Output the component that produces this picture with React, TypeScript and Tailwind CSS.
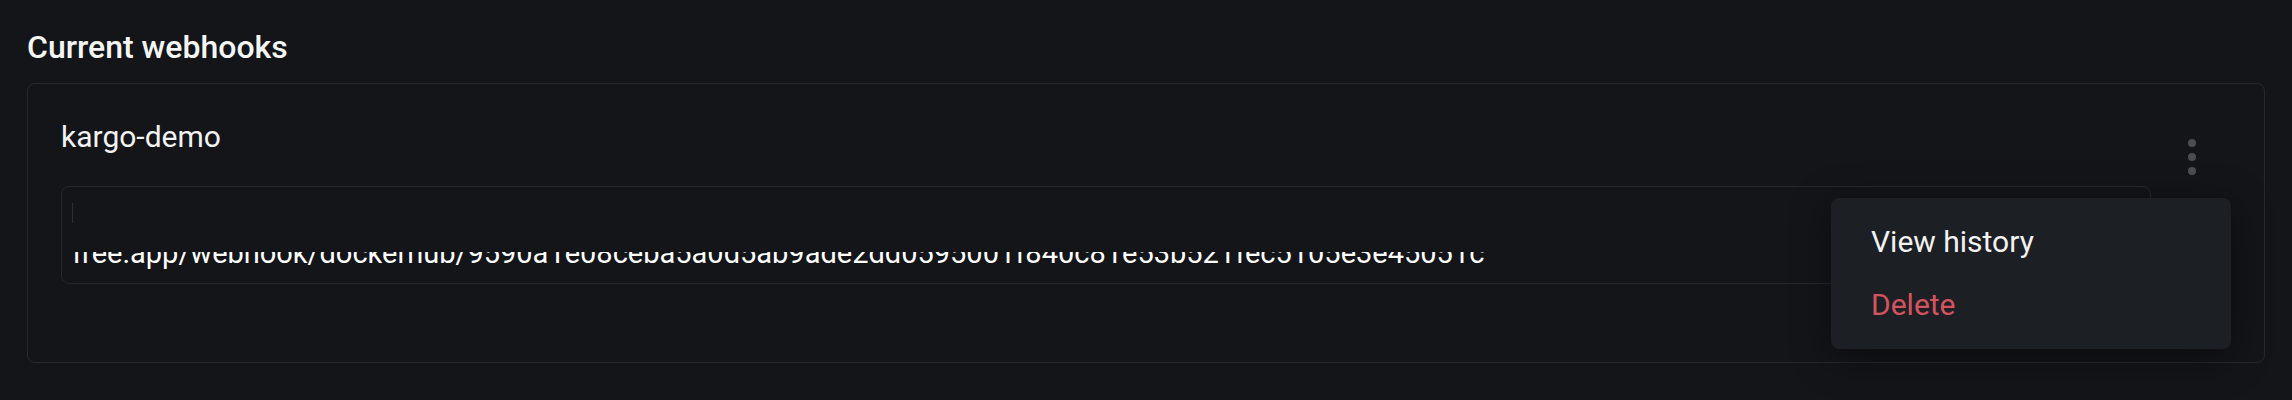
import React from "react";

const URL_TAIL =
  "free.app/webhook/dockerhub/9590a1e08ceba5a0d5ab9ade2dd0595001f840c81e53b521fec5105e3e45051c";

function Kebab() {
  return (
    <div className="flex w-[8px] flex-col gap-[6px]">
      <span className="block w-[8px] h-[8px] rounded-full bg-[#4a4d52]" />
      <span className="block w-[8px] h-[8px] rounded-full bg-[#4a4d52]" />
      <span className="block w-[8px] h-[8px] rounded-full bg-[#4a4d52]" />
    </div>
  );
}

export default function App() {
  return (
    <div
      className="min-h-[400px] w-full bg-[#131519] px-[27px] pt-[28px] text-white"
      style={{ fontFamily: "Roboto, 'Liberation Sans', sans-serif" }}
    >
      <h2 className="text-[32px] leading-[38px] font-medium text-[#f5f5f5]">
        Current webhooks
      </h2>

      <div className="relative mt-[17px] rounded-[8px] border border-[#25292e] px-[33px] pt-[35px] pb-[78px]">
        <div className="flex">
          <div className="flex-1 min-w-0">
            <div className="text-[30px] leading-[35px] font-normal text-[#f2f2f2]">
              kargo-demo
            </div>
            <div className="mt-[32px] h-[98px] overflow-hidden rounded-[8px] border border-[#25292e] pl-[10px]">
              <div className="mt-[16px] h-[20px] w-px bg-[#2c3035]" />
              <div className="mt-[29px] h-[31px] overflow-hidden">
                <div className="mt-[-14px] whitespace-nowrap text-[29px] leading-[30px] text-white">
                  {URL_TAIL}
                </div>
              </div>
            </div>
          </div>
          <div className="w-[80px] pl-[37px] pt-[20px]">
            <Kebab />
          </div>
        </div>

        <div className="absolute right-[33px] top-[114px] w-[400px] rounded-[8px] bg-[#1c1f24] pt-[12px] pb-[13px] shadow-[0_8px_40px_rgba(0,0,0,0.45)]">
          <div className="flex h-[63px] items-center pl-[40px] text-[30px] leading-[35px] text-[#f2f2f2]">
            View history
          </div>
          <div className="flex h-[63px] items-center pl-[40px] text-[30px] leading-[35px] text-[#d5535f]">
            Delete
          </div>
        </div>
      </div>
    </div>
  );
}
